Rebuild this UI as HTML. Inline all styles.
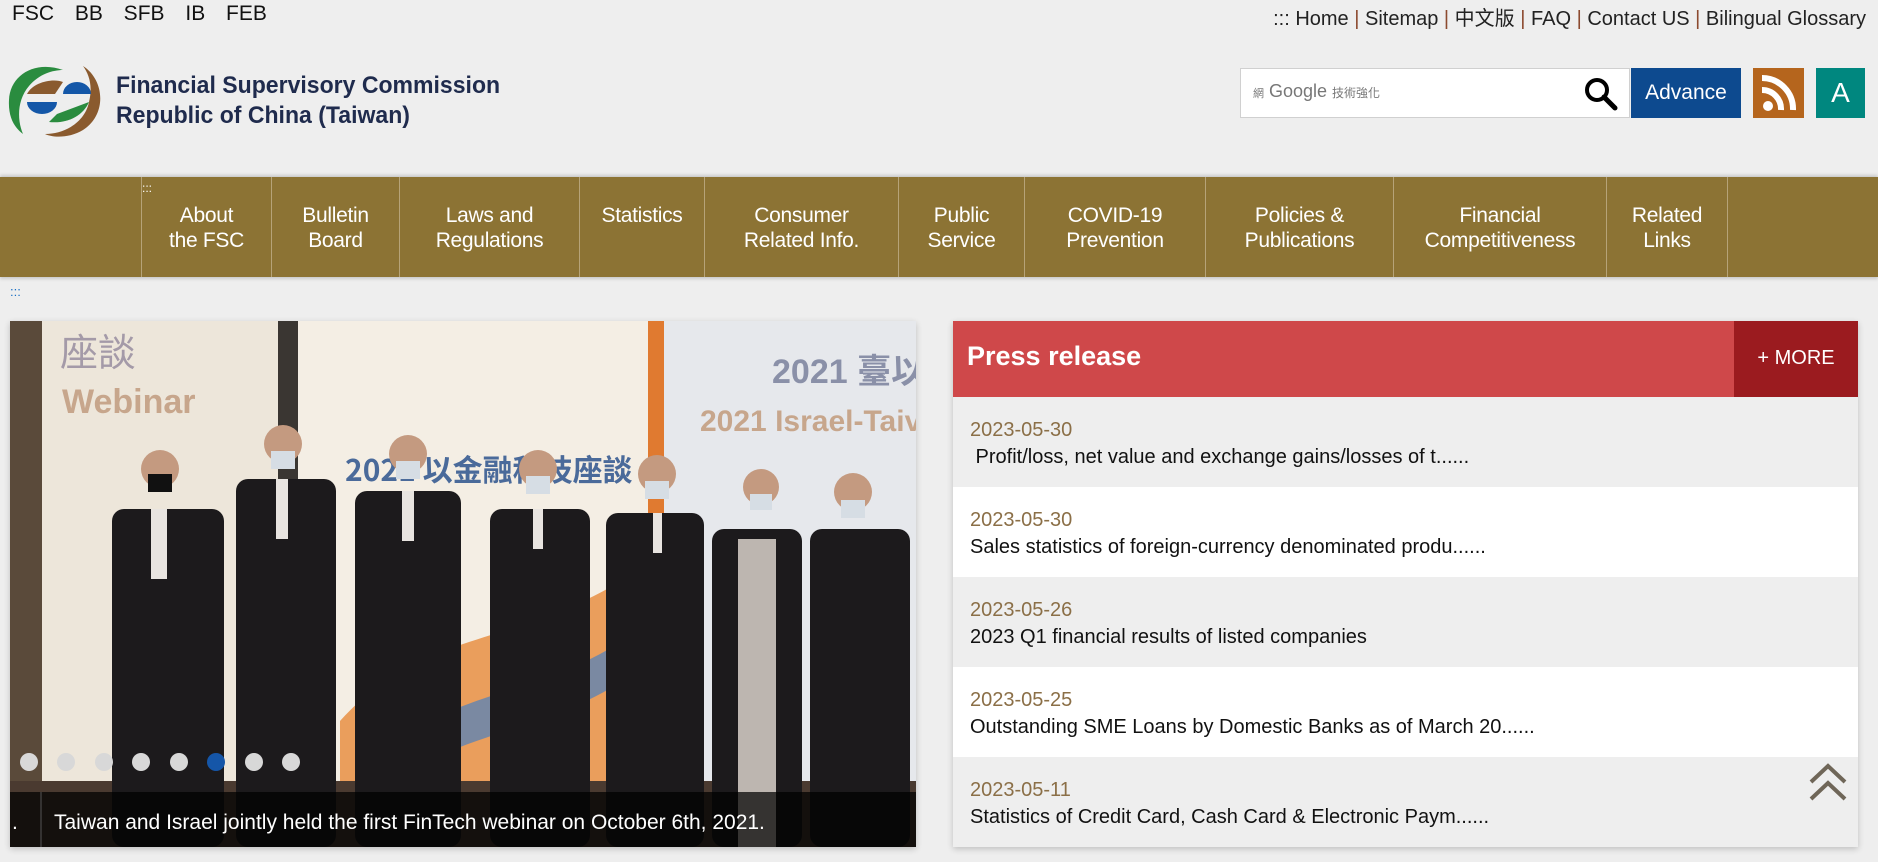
<!DOCTYPE html>
<html><head><meta charset="utf-8"><style>
*{margin:0;padding:0;box-sizing:border-box}
body{width:1878px;height:862px;background:#eeeeee;font-family:"Liberation Sans","Noto Sans CJK TC",sans-serif;position:relative;overflow:hidden}
.a{position:absolute}
.nav{left:0;top:177px;width:1878px;height:100px;background:#8c7334;box-shadow:0 -2px 3px rgba(0,0,0,.15),0 2px 3px rgba(0,0,0,.15)}
.nav div{position:absolute;top:0;height:100px;border-left:1px solid #b6a378;color:#fff;font-size:21px;line-height:25px;text-align:center;padding-top:26px;letter-spacing:-0.3px}
.row{position:absolute;left:953px;width:905px;height:90px;padding:20px 0 0 17px}
.d{color:#8b6f47;font-size:20px;line-height:26px}
.t{color:#111;font-size:20px;line-height:28px}
</style></head><body>
<div class="a" style="left:12px;top:2px;font-size:21px;word-spacing:15px;color:#111">FSC BB SFB IB FEB</div>
<div class="a" style="right:12px;top:2px;font-size:20px;color:#222">::: Home <span style="color:#8c4a2f">|</span> Sitemap <span style="color:#8c4a2f">|</span> 中文版 <span style="color:#8c4a2f">|</span> FAQ <span style="color:#8c4a2f">|</span> Contact US <span style="color:#8c4a2f">|</span> Bilingual Glossary</div>
<svg class="a" style="left:5px;top:60px" width="100" height="78" viewBox="0 0 100 78">
<path d="M58 10 C30 0 5 15 4 40 C3 58 10 68 18 74 C12 60 12 40 24 26 C34 14 48 10 58 10Z" fill="#2a8c3f"/>
<path d="M78 6 C100 20 102 55 78 70 C65 78 48 78 40 74 C60 74 80 62 84 42 C88 26 84 14 78 6Z" fill="#8a5a2e"/>
<path d="M22 34 C28 22 48 18 58 22 L50 34Z" fill="#8a5a2e"/>
<path d="M58 34 A14 12 0 0 1 86 34Z" fill="#1457a8"/>
<path d="M22 42 L52 42 A15 12 0 0 1 22 42Z" fill="#1457a8"/>
<path d="M52 54 L84 42 C78 56 62 64 44 62Z" fill="#2a8c3f"/>
</svg>
<div class="a" style="left:116px;top:71px;font-size:24px;line-height:30px;font-weight:bold;color:#1f2b4d;transform:scaleX(.96);transform-origin:left">Financial Supervisory Commission<br>Republic of China (Taiwan)</div>
<div class="a" style="left:1240px;top:68px;width:390px;height:50px;background:#fff;border:1px solid #d0d0d0"></div>
<div class="a" style="left:1253px;top:81px;font-size:18px;color:#777"><span style="font-size:11px">網</span> Google <span style="font-size:12px">技術強化</span></div>
<svg class="a" style="left:1583px;top:76px" width="36" height="36" viewBox="0 0 36 36"><circle cx="14" cy="14" r="10" fill="none" stroke="#000" stroke-width="4"/><path d="M21 21 L32 32" stroke="#000" stroke-width="5" stroke-linecap="round"/></svg>
<div class="a" style="left:1631px;top:68px;width:110px;height:50px;background:#0d4a8f;color:#fff;font-size:21px;text-align:center;line-height:50px">Advance</div>
<div class="a" style="left:1753px;top:68px;width:51px;height:50px;background:#b5651d"></div>
<svg class="a" style="left:1753px;top:68px" width="51" height="50" viewBox="0 0 51 50"><circle cx="15" cy="38" r="5" fill="#fff"/><path d="M9 22 A19 19 0 0 1 28 42" fill="none" stroke="#fff" stroke-width="6"/><path d="M9 10 A31 31 0 0 1 40 42" fill="none" stroke="#fff" stroke-width="6"/></svg>
<div class="a" style="left:1816px;top:68px;width:49px;height:50px;background:#00877f;color:#fff;font-size:28px;text-align:center;line-height:50px">A</div>
<div class="a nav">
<span style="position:absolute;left:142px;top:4px;color:#fff;font-size:12px">:::</span>
<div style="left:141px;width:130px">About<br>the FSC</div>
<div style="left:271px;width:128px">Bulletin<br>Board</div>
<div style="left:399px;width:180px">Laws and<br>Regulations</div>
<div style="left:579px;width:125px">Statistics</div>
<div style="left:704px;width:194px">Consumer<br>Related Info.</div>
<div style="left:898px;width:126px">Public<br>Service</div>
<div style="left:1024px;width:181px">COVID-19<br>Prevention</div>
<div style="left:1205px;width:188px">Policies &amp;<br>Publications</div>
<div style="left:1393px;width:213px">Financial<br>Competitiveness</div>
<div style="left:1606px;width:121px">Related<br>Links</div>
<div style="left:1727px;width:1px"></div>
</div>
<div class="a" style="left:10px;top:284px;color:#1a6fc4;font-size:13px">:::</div>
<div class="a" style="left:10px;top:321px;width:906px;height:526px;overflow:hidden;box-shadow:0 2px 6px rgba(0,0,0,.2)">
<svg width="906" height="526" viewBox="0 0 906 526">
<rect width="906" height="526" fill="#d9cdb8"/>
<rect x="0" y="0" width="32" height="526" fill="#5a4a3a"/>
<rect x="32" y="0" width="236" height="526" fill="#ede6da"/>
<rect x="268" y="0" width="20" height="526" fill="#3a3632"/>
<rect x="288" y="0" width="350" height="526" fill="#f4eee4"/>
<path d="M330 400 C420 300 520 330 640 240 L640 526 L330 526Z" fill="#e78a3a" opacity=".8"/>
<path d="M360 440 C450 360 540 380 640 300 L640 340 C540 420 450 400 360 480Z" fill="#4a80c0" opacity=".7"/>
<rect x="638" y="0" width="16" height="526" fill="#e07a30"/>
<rect x="654" y="0" width="252" height="526" fill="#e6e8ec"/>
<text x="50" y="45" font-size="38" fill="#a49aa8" font-family="Noto Sans CJK TC">座談</text>
<text x="52" y="92" font-size="34" font-weight="bold" fill="#c7a68c">Webinar</text>
<text x="762" y="62" font-size="34" font-weight="bold" fill="#8a90a8">2021 臺以</text>
<text x="690" y="110" font-size="30" font-weight="bold" fill="#c7a68c">2021 Israel-Taiv</text>
<text x="335" y="160" font-size="30" font-weight="bold" fill="#4a6a9a" font-family="Noto Sans CJK TC">2021 以金融科技座談</text>
<rect y="460" width="906" height="66" fill="#4a3a30"/>
<g fill="#1c1a1c">
<rect x="102" y="188" width="112" height="338" rx="12"/>
<rect x="226" y="158" width="100" height="368" rx="12"/>
<rect x="345" y="170" width="106" height="356" rx="12"/>
<rect x="480" y="188" width="100" height="338" rx="12"/>
<rect x="596" y="192" width="98" height="334" rx="12"/>
<rect x="702" y="208" width="90" height="318" rx="12"/>
<rect x="800" y="208" width="100" height="318" rx="12"/>
</g>
<rect x="728" y="218" width="38" height="308" fill="#bdb6b0"/>
<g fill="#c49a80"><circle cx="150" cy="148" r="19"/><circle cx="273" cy="123" r="19"/><circle cx="398" cy="133" r="19"/><circle cx="528" cy="148" r="19"/><circle cx="647" cy="153" r="19"/><circle cx="751" cy="166" r="18"/><circle cx="843" cy="171" r="19"/></g>
<g fill="#d6dde4"><rect x="138" y="153" width="24" height="18" fill="#111"/><rect x="261" y="130" width="24" height="18"/><rect x="386" y="140" width="24" height="18"/><rect x="516" y="155" width="24" height="18"/><rect x="635" y="160" width="24" height="18"/><rect x="740" y="173" width="22" height="16"/><rect x="831" y="179" width="24" height="18"/></g>
<g fill="#e8e4e0"><rect x="141" y="188" width="16" height="70"/><rect x="266" y="158" width="12" height="60"/><rect x="392" y="170" width="12" height="50"/><rect x="523" y="188" width="10" height="40"/><rect x="643" y="192" width="9" height="40"/></g>
<rect x="0" y="471" width="906" height="55" fill="rgba(0,0,0,.72)"/>
<line x1="31" y1="471" x2="31" y2="526" stroke="#555"/>
<g fill="#d8d8d8"><ellipse cx="19" cy="441" rx="9" ry="9"/><ellipse cx="56" cy="441" rx="9" ry="9"/><ellipse cx="94" cy="441" rx="9" ry="9"/><ellipse cx="131" cy="441" rx="9" ry="9"/><ellipse cx="169" cy="441" rx="9" ry="9"/><ellipse cx="206" cy="441" rx="9" ry="9" fill="#1556a8"/><ellipse cx="244" cy="441" rx="9" ry="9"/><ellipse cx="281" cy="441" rx="9" ry="9"/></g>
<text x="44" y="508" font-size="21" fill="#fff" font-family="Liberation Sans">Taiwan and Israel jointly held the first FinTech webinar on October 6th, 2021.</text>
<text x="2" y="508" font-size="21" fill="#fff">.</text>
</svg></div>
<div class="a" style="left:953px;top:321px;width:905px;height:526px;background:#eee;box-shadow:0 2px 6px rgba(0,0,0,.2)"></div>
<div class="a" style="left:953px;top:321px;width:905px;height:76px;background:#cf484a"></div>
<div class="a" style="left:1734px;top:321px;width:124px;height:76px;background:#9b1b1f;color:#fff;font-size:20px;line-height:74px;text-align:center">+ MORE</div>
<div class="a" style="left:967px;top:341px;color:#fff;font-size:27px;font-weight:bold">Press release</div>
<div class="row" style="top:397px;background:#eee"><div class="d">2023-05-30</div><div class="t">&nbsp;Profit/loss, net value and exchange gains/losses of t......</div></div>
<div class="row" style="top:487px;background:#fff"><div class="d">2023-05-30</div><div class="t">Sales statistics of foreign-currency denominated produ......</div></div>
<div class="row" style="top:577px;background:#eee"><div class="d">2023-05-26</div><div class="t">2023 Q1 financial results of listed companies</div></div>
<div class="row" style="top:667px;background:#fff"><div class="d">2023-05-25</div><div class="t">Outstanding SME Loans by Domestic Banks as of March 20......</div></div>
<div class="row" style="top:757px;background:#eee"><div class="d">2023-05-11</div><div class="t">Statistics of Credit Card, Cash Card &amp; Electronic Paym......</div></div>
<svg class="a" style="left:1808px;top:762px" width="40" height="40" viewBox="0 0 40 40"><path d="M3 20 L20 4 L37 20 M3 37 L20 21 L37 37" fill="none" stroke="#6f6658" stroke-width="4"/></svg>
</body></html>
